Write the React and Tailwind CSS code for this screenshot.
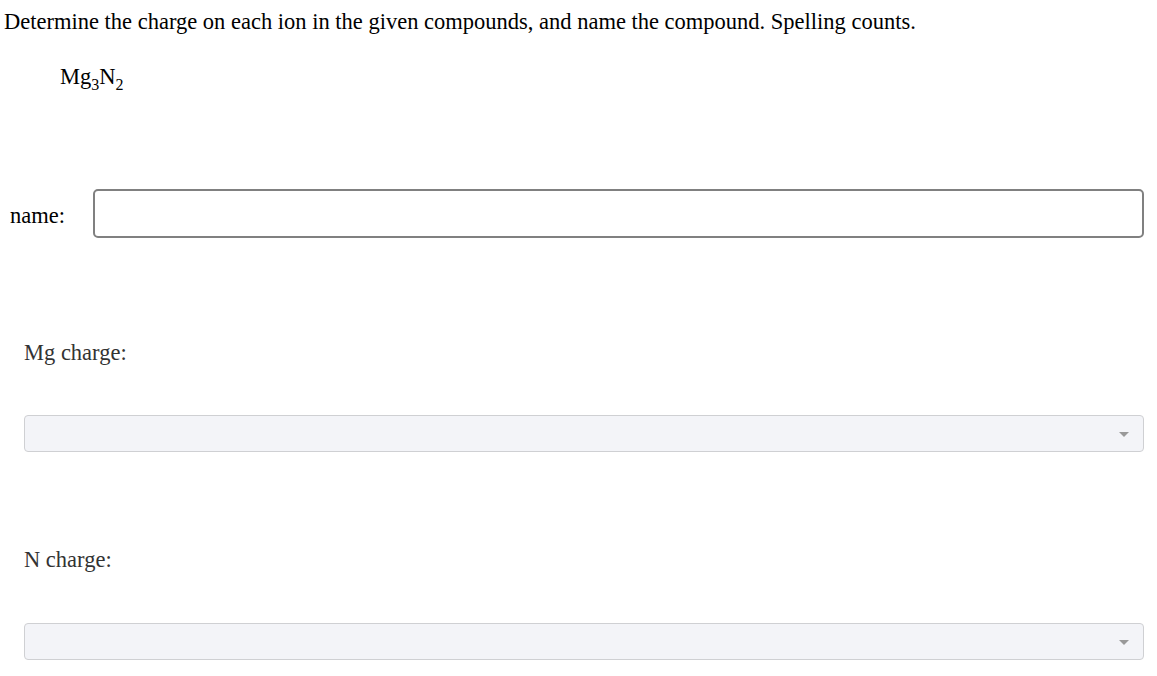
import React from 'react';

const ChargeSelect = ({ label, gap }) => {
  return (
    <div className={`flex flex-col ${gap} pl-6 pr-[13px]`}>
      <div className="text-[22.5px] text-[#333] leading-[24px]">{label}</div>
      <div className="flex items-center justify-end pr-[14px] pt-[2px] h-[37px] bg-[#f3f4f8] border border-[#cfd0d3] rounded-[4px]">
        <span className="w-0 h-0 border-l-[5px] border-r-[5px] border-t-[5px] border-l-transparent border-r-transparent border-t-[#999]"></span>
      </div>
    </div>
  );
};

const App = () => {
  return (
    <div className="flex flex-col w-[1157px] h-[676px] bg-white text-black font-['Liberation_Serif',serif] overflow-hidden">
      <p className="pl-[4px] pt-[10px] text-[22.5px] leading-[24px] whitespace-nowrap">
        Determine the charge on each ion in the given compounds, and name the compound. Spelling counts.
      </p>
      <div className="pl-[60px] mt-[31px] h-[24px] text-[22.5px] leading-[24px]">
        Mg<sub className="text-[16px] leading-[0] align-[-2px]">3</sub>N<sub className="text-[16px] leading-[0] align-[-2px]">2</sub>
      </div>
      <div className="flex items-center pl-[10px] pr-[13px] mt-[100px]">
        <span className="pt-[4px] text-[22.5px] leading-[24px] w-[83px]">name:</span>
        <input type="text" className="flex-1 h-[49px] border-2 border-[#808080] rounded-[5px] bg-white outline-none px-2" />
      </div>
      <div className="flex flex-col gap-[96px] mt-[103px]">
        <ChargeSelect label="Mg charge:" gap="gap-[50px]" />
        <ChargeSelect label="N charge:" gap="gap-[51px]" />
      </div>
    </div>
  );
};

export default App;
